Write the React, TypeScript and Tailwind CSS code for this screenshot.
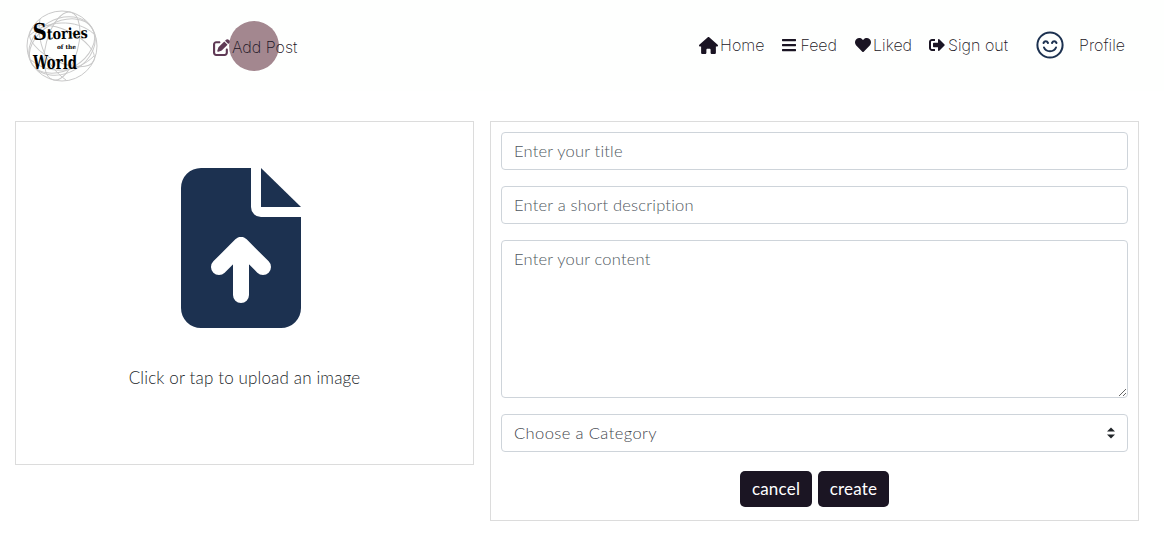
import { FaBars, FaHeart, FaSignOutAlt } from 'react-icons/fa';
import { FaHouse, FaPenToSquare } from 'react-icons/fa6';

const bodyFont = "font-['Lato',sans-serif]";
const navFont = "font-['Inter',sans-serif]";

function Logo() {
    return (
        <svg width="72" height="72" viewBox="0 0 72 72" className="shrink-0">
            <g fill="none" stroke="#c9c9c9" strokeWidth="1">
                <circle cx="36" cy="36" r="35" />
                <ellipse cx="36" cy="36" rx="35" ry="16" transform="rotate(25 36 36)" />
                <ellipse cx="36" cy="36" rx="35" ry="24" transform="rotate(-30 36 36)" />
                <ellipse cx="36" cy="36" rx="16" ry="35" transform="rotate(15 36 36)" />
                <ellipse cx="36" cy="36" rx="27" ry="35" transform="rotate(60 36 36)" />
                <path d="M3 26 C20 10 50 8 68 24 M5 50 C24 66 52 62 68 46 M14 9 C10 30 20 56 40 70" />
            </g>
            <g fill="#000" fontFamily="'DejaVu Serif', serif" fontWeight="700">
                <text x="7" y="30" fontSize="15" textLength="55" lengthAdjust="spacingAndGlyphs" transform="rotate(-2 7 30)">
                    <tspan fontSize="23">S</tspan>tories
                </text>
                <text x="31" y="39" fontSize="6" textLength="19" lengthAdjust="spacingAndGlyphs">of the</text>
                <text x="7" y="59" fontSize="18" textLength="44" lengthAdjust="spacingAndGlyphs">World</text>
            </g>
        </svg>
    );
}

function Smile() {
    return (
        <svg width="28" height="28" viewBox="0 0 28 28" fill="none" stroke="#1c3150" strokeWidth="2" strokeLinecap="round">
            <circle cx="14" cy="14" r="12.6" />
            <path d="M7.5 12 C8.5 9.6 11 9.6 12 12 M16 12 C17 9.6 19.5 9.6 20.5 12" />
            <path d="M8 16.5 C10 21.5 18 21.5 20 16.5" />
        </svg>
    );
}

function UploadIcon() {
    return (
        <svg width="120" height="160" viewBox="0 0 120 160" className="mr-[8px]">
            <path fill="#1c3150" d="M20 0 H70 V39 A10 10 0 0 0 80 49 H120 V140 A20 20 0 0 1 100 160 H20 A20 20 0 0 1 0 140 V20 A20 20 0 0 1 20 0 Z" />
            <path fill="#1c3150" d="M80 0 L120 39 H80 Z" />
            <path fill="none" stroke="#fff" strokeWidth="16" strokeLinecap="round" strokeLinejoin="round" d="M60 127 V77 M38 99 L60 77 L82 99" />
        </svg>
    );
}

const fieldClass = "block w-full rounded-[4px] border border-[#ced4da] bg-white px-[12px] text-[16.5px] tracking-[0.2px] outline-none";

export default function App() {
    return (
        <div className={`${bodyFont} min-h-[559px] bg-white text-[#212529]`}>
            {/* Navbar */}
            <nav className="flex h-[91px] items-start bg-[#fefffe] pl-[26px] pr-[39px] pt-[10px]">
                <Logo />
                <div className={`${navFont} relative ml-[115px] mt-[25px] flex items-center gap-[2px] text-[16px] font-extralight text-[#1a1423]`}>
                    <div className="absolute left-[16px] top-[-14px] h-[50px] w-[50px] rounded-full bg-[#a3878f]"></div>
                    <FaPenToSquare className="relative text-[17px] text-[#5f3a55]" />
                    <span className="relative">Add Post</span>
                </div>
                <div className={`${navFont} ml-auto mt-[21px] flex items-center text-[16px] font-extralight text-[#1a1423]`}>
                    <div className="flex items-center gap-[2px]">
                        <FaHouse className="text-[19px]" />
                        <span>Home</span>
                    </div>
                    <div className="ml-[17px] flex items-center gap-[3px]">
                        <FaBars className="text-[16px]" />
                        <span>Feed</span>
                    </div>
                    <div className="ml-[18px] flex items-center gap-[2px]">
                        <FaHeart className="text-[16px]" />
                        <span>Liked</span>
                    </div>
                    <div className="ml-[17px] flex items-center gap-[3px]">
                        <FaSignOutAlt className="text-[16px]" />
                        <span>Sign out</span>
                    </div>
                    <div className="ml-[28px] flex items-center gap-[15px]">
                        <Smile />
                        <span>Profile</span>
                    </div>
                </div>
            </nav>

            {/* Upload + form */}
            <main className="flex items-start gap-[16px] pl-[15px] pt-[30px]">
                <div className="flex h-[344px] w-[459px] flex-col items-center border border-[#dcdcdc] pt-[46px]">
                    <UploadIcon />
                    <p className="mt-[40px] text-[17px] font-light leading-[20px] tracking-[0.15px]">Click or tap to upload an image</p>
                </div>
                <form className="flex h-[400px] w-[649px] flex-col border border-[#dcdcdc] px-[10px] pt-[10px]">
                    <input className={`${fieldClass} h-[38px] text-[#212529] font-light placeholder:text-[#4f5860]`} placeholder="Enter your title" />
                    <input className={`${fieldClass} mt-[16px] h-[38px] text-[#212529] font-light placeholder:text-[#4f5860]`} placeholder="Enter a short description" />
                    <textarea className={`${fieldClass} mt-[16px] h-[158px] py-[6px] text-[#212529] font-light placeholder:text-[#4f5860]`} placeholder="Enter your content"></textarea>
                    <div className={`${fieldClass} relative mt-[16px] flex h-[38px] items-center font-light text-[#3f464d]`}>
                        <span className="tracking-[0.4px]">Choose a Category</span>
                        <svg width="10" height="14" viewBox="0 0 10 14" className="absolute right-[11px] top-[11px]" fill="#212529">
                            <path d="M5 1.5 L9 5.5 H1 Z M1 8.5 H9 L5 12.5 Z" />
                        </svg>
                    </div>
                    <div className="mt-[19px] flex justify-center gap-[6px]">
                        <button type="button" className="h-[36px] w-[72px] rounded-[5px] bg-[#1b1523] text-[17px] tracking-[0.2px] text-white">cancel</button>
                        <button type="button" className="h-[36px] w-[71px] rounded-[5px] bg-[#1b1523] text-[17px] tracking-[0.2px] text-white">create</button>
                    </div>
                </form>
            </main>
        </div>
    );
}
